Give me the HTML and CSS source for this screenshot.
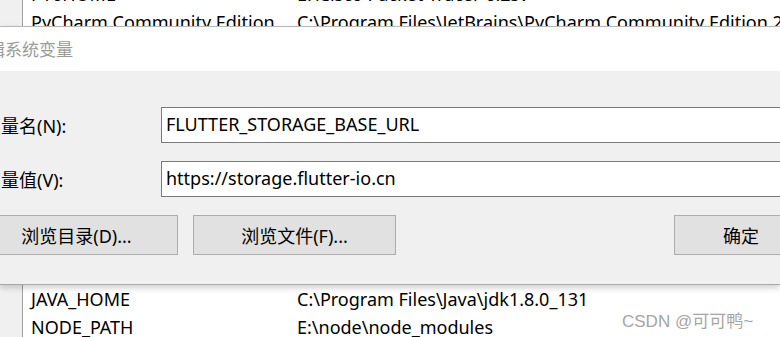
FILE: index.html
```html
<!DOCTYPE html>
<html lang="zh-CN">
<head>
  <meta charset="UTF-8">
  <title>编辑系统变量</title>
  <link rel="stylesheet" href="styles.css">
</head>
<body>
  <div class="list list-top">
    <div class="rows">
      <div class="row"><span class="gutter"></span><span class="c1">PT6HOME</span><span class="c2">E:\Cisco Packet Tracer 6.2sv</span></div>
      <div class="row"><span class="gutter"></span><span class="c1">PyCharm Community Edition</span><span class="c2">C:\Program Files\JetBrains\PyCharm Community Edition 2019.1</span></div>
    </div>
  </div>

  <div class="dialog">
    <div class="title">编辑系统变量</div>
    <div class="content">
      <div class="form-row">
        <label class="label">变量名(N):</label>
        <div class="field">FLUTTER_STORAGE_BASE_URL</div>
      </div>
      <div class="form-row">
        <label class="label">变量值(V):</label>
        <div class="field">https://storage.flutter-io.cn</div>
      </div>
      <div class="buttons">
        <button class="btn">浏览目录(D)...</button>
        <button class="btn">浏览文件(F)...</button>
        <button class="btn btn-ok">确定</button>
      </div>
    </div>
  </div>

  <div class="list list-bottom">
    <div class="row"><span class="gutter"></span><span class="c1">JAVA_HOME</span><span class="c2">C:\Program Files\Java\jdk1.8.0_131</span></div>
    <div class="row"><span class="gutter"></span><span class="c1">NODE_PATH</span><span class="c2">E:\node\node_modules</span></div>
    <div class="watermark">CSDN @可可鸭~</div>
  </div>
</body>
</html>
```

FILE: styles.css
```css
html, body {
  margin: 0;
  padding: 0;
  width: 780px;
  height: 337px;
  overflow: hidden;
  background: #fff;
  font-family: "Noto Sans", "Noto Sans CJK SC", sans-serif;
  font-size: 18px;
  color: #000;
}
.list {
  background: #fff;
  overflow: hidden;
  position: relative;
}
.list-top {
  height: 26px;
}
.list-top .rows {
  margin-top: -20px;
}
.list-bottom {
  height: 53px;
}
.row {
  display: flex;
  align-items: center;
  height: 28px;
  white-space: nowrap;
}
.gutter {
  align-self: stretch;
  width: 22px;
  flex: none;
  background: #f0f0f0;
  border-right: 1px solid #a0a0a0;
}
.c1 {
  width: 266px;
  padding-left: 8px;
  flex: none;
}
.c2 {
  flex: none;
}
.dialog {
  height: 257px;
  border-top: 1px solid #b8b8b8;
  border-bottom: 1px solid #a8a8a8;
  box-shadow: 0 3px 6px rgba(0, 0, 0, 0.18);
  position: relative;
  z-index: 1;
  background: #f0f0f0;
}
.title {
  height: 44px;
  background: #fff;
  color: #9b9b9b;
  font-family: "Noto Sans CJK SC", sans-serif;
  font-size: 17px;
  line-height: 44px;
  margin-left: -29px;
  white-space: nowrap;
}
.content {
  margin-left: -25px;
  padding-top: 36px;
}
.form-row {
  display: flex;
  align-items: center;
  height: 36px;
  margin-bottom: 18px;
  white-space: nowrap;
}
.label {
  width: 178px;
  padding-left: 8px;
  flex: none;
  font-size: 18px;
}
.field {
  box-sizing: border-box;
  width: 700px;
  height: 36px;
  flex: none;
  background: #fff;
  border: 1px solid #7a7a7a;
  padding-left: 4px;
  line-height: 33px;
}
.buttons {
  display: flex;
  gap: 15px;
  width: 833px;
  margin-top: 7px;
}
.btn {
  box-sizing: border-box;
  width: 203px;
  height: 40px;
  background: #e1e1e1;
  border: 1px solid #adadad;
  font-family: "Noto Sans", "Noto Sans CJK SC", sans-serif;
  font-size: 18px;
  color: #000;
  padding: 0;
  white-space: nowrap;
}
.btn-ok {
  width: 134px;
  margin-left: auto;
}
.watermark {
  position: absolute;
  left: 622px;
  top: 22px;
  color: #a5a5a5;
  font-family: "Liberation Sans", "Noto Sans CJK SC", sans-serif;
  font-size: 17px;
  white-space: nowrap;
}
```
